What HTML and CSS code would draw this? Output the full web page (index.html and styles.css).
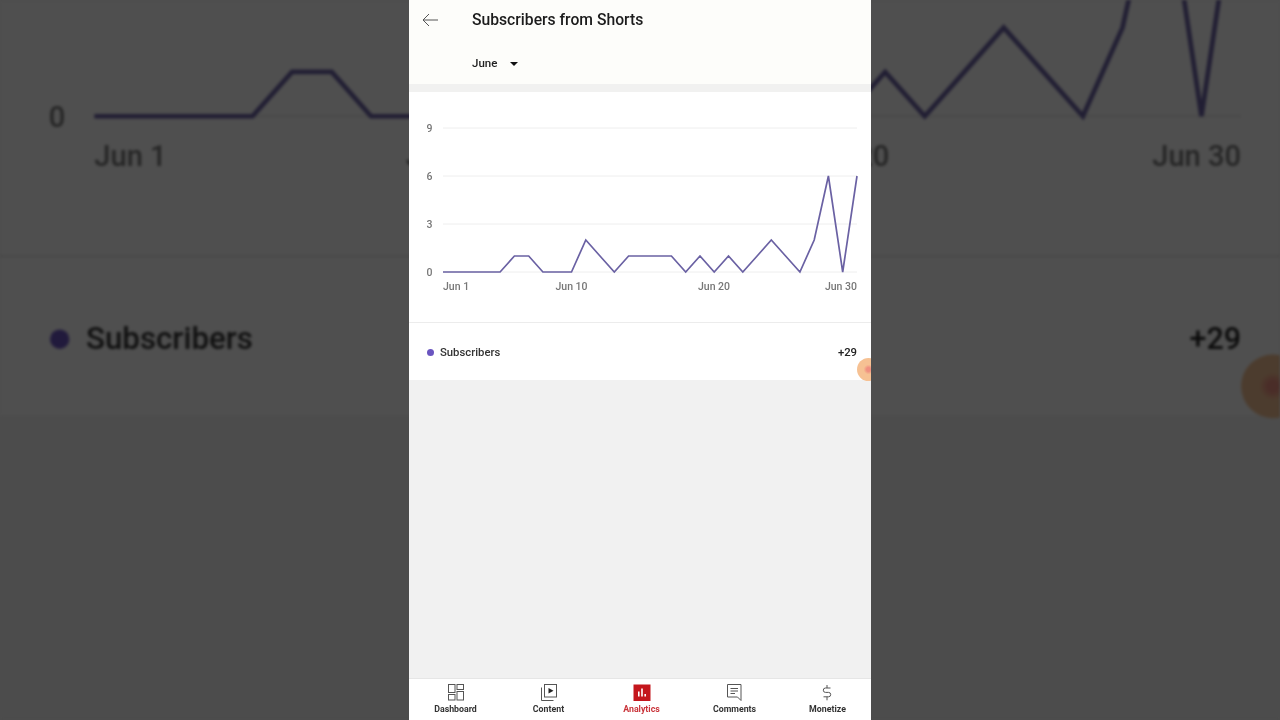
FILE: index.html
```html
<!DOCTYPE html>
<html lang="en">
<head>
  <meta charset="UTF-8">
  <meta name="viewport" content="width=device-width, initial-scale=1.0">
  <title>Subscribers from Shorts</title>
  <link rel="stylesheet" href="styles.css">
</head>
<body>

  <!-- Blurred video backdrop: same screen, zoomed to fill the frame -->
  <div class="backdrop">
    <div class="backdrop-screen">
      <div class="backdrop-spacer"></div>
      <section class="chart">
        <svg class="chart-svg" width="462" height="230" viewBox="0 0 462 230">
          <use href="#chartContent"></use>
        </svg>
      </section>
      <section class="legend">
        <span class="legend-dot"></span>
        <span class="legend-name">Subscribers</span>
        <span class="legend-value">+29</span>
        <span class="touch-dot"></span>
      </section>
    </div>
  </div>

  <div class="phone">

    <!-- Header -->
    <header class="topbar">
      <div class="title-row">
        <svg class="back-icon" width="18" height="14" viewBox="0 0 18 14">
          <path d="M17 7H2M8 1L2 7l6 6" fill="none" stroke="#555" stroke-width="1"/>
        </svg>
        <h1>Subscribers from Shorts</h1>
      </div>
      <div class="month-row">
        <span>June</span>
        <span class="caret"></span>
      </div>
    </header>

    <!-- Chart -->
    <section class="chart">
      <svg class="chart-svg" width="462" height="230" viewBox="0 0 462 230">
        <g id="chartContent">
          <g class="grid">
            <line x1="34" y1="36" x2="448" y2="36"/>
            <line x1="34" y1="84" x2="448" y2="84"/>
            <line x1="34" y1="132" x2="448" y2="132"/>
            <line x1="34" y1="180" x2="448" y2="180"/>
          </g>
          <g class="y-labels">
            <text x="20.5" y="40">9</text>
            <text x="20.5" y="88">6</text>
            <text x="20.5" y="136">3</text>
            <text x="20.5" y="184">0</text>
          </g>
          <polyline class="line" points="34,180 48.3,180 62.6,180 76.8,180 91.1,180 105.4,164 119.7,164 133.9,180 148.2,180 162.5,180 176.8,148 191,164 205.3,180 219.6,164 233.9,164 248.1,164 262.4,164 276.7,180 291,164 305.2,180 319.5,164 333.8,180 348.1,164 362.3,148 376.6,164 390.9,180 405.2,148 419.4,84 433.7,180 448,84"/>
          <g class="x-labels">
            <text x="34" y="198">Jun 1</text>
            <text x="162.5" y="198" text-anchor="middle">Jun 10</text>
            <text x="305" y="198" text-anchor="middle">Jun 20</text>
            <text x="448" y="198" text-anchor="end">Jun 30</text>
          </g>
        </g>
      </svg>
    </section>

    <!-- Legend -->
    <section class="legend">
      <span class="legend-dot"></span>
      <span class="legend-name">Subscribers</span>
      <span class="legend-value">+29</span>
      <span class="touch-dot"></span>
    </section>

    <div class="empty"></div>

    <!-- Bottom navigation -->
    <nav class="bottom-nav">
      <a class="nav-item">
        <svg width="18" height="17" viewBox="0 0 18 17" fill="none" stroke="#555" stroke-width="1">
          <rect x="1.5" y="0.5" width="6.5" height="8"/>
          <rect x="10" y="0.5" width="6.5" height="5"/>
          <rect x="1.5" y="10.5" width="6.5" height="5.5"/>
          <rect x="10" y="7.5" width="6.5" height="8.5"/>
        </svg>
        <span>Dashboard</span>
      </a>
      <a class="nav-item">
        <svg width="18" height="17" viewBox="0 0 18 17" fill="none" stroke="#555" stroke-width="1">
          <rect x="4.5" y="0.5" width="12" height="12.5"/>
          <path d="M1.5 3.5v13h12"/>
          <path d="M8.5 4l5 2.8-5 2.8z" fill="#222" stroke="none"/>
        </svg>
        <span>Content</span>
      </a>
      <a class="nav-item active">
        <svg width="18" height="17" viewBox="0 0 18 17">
          <rect width="17" height="16.5" x="0.5" y="0.5" fill="#c4161c"/>
          <path d="M5 7.5h1.6v5H5zM8.2 4.5h1.6v8H8.2zM11.4 10h1.6v2.5h-1.6z" fill="#fff"/>
        </svg>
        <span>Analytics</span>
      </a>
      <a class="nav-item">
        <svg width="18" height="17" viewBox="0 0 18 17" fill="none" stroke="#555" stroke-width="1">
          <path d="M1.5 0.5h13.5v16l-3.5-3.5h-10z"/>
          <path d="M4.5 4.5h7.5M4.5 7h7.5M4.5 9.5h4.5"/>
        </svg>
        <span>Comments</span>
      </a>
      <a class="nav-item">
        <svg width="18" height="17" viewBox="0 0 18 17" fill="none" stroke="#555" stroke-width="1">
          <path d="M11.5 4H6.5a2.2 2.2 0 0 0 0 4.4h3a2.2 2.2 0 0 1 0 4.4H4.5"/>
          <path d="M8 1v3M8 12.8v3.5"/>
        </svg>
        <span>Monetize</span>
      </a>
    </nav>
  </div>

</body>
</html>
```

FILE: styles.css
```css
/* Basic Reset */
* {
  margin: 0;
  padding: 0;
  box-sizing: border-box;
}

body {
  width: 1280px;
  height: 720px;
  overflow: hidden;
  display: flex;
  justify-content: center;
  font-family: Roboto, "Liberation Sans", sans-serif;
  color: #222;
  background-color: #4c4c4c;
}

/* Backdrop */
.backdrop {
  position: absolute;
  top: 0;
  left: 0;
  width: 1280px;
  height: 720px;
  overflow: hidden;
  display: flex;
  justify-content: center;
  filter: brightness(0.31) blur(1.4px);
}

.backdrop-screen {
  flex: none;
  width: 462px;
  height: 720px;
  background-color: #f6f6f6;
  transform: scale(2.77);
}

.backdrop-spacer {
  height: 92px;
  background-color: #fff;
}

.backdrop .legend-value {
  font-size: 11px;
}

/* Phone screen */
.phone {
  position: relative;
  width: 462px;
  height: 720px;
  overflow: hidden;
  display: flex;
  flex-direction: column;
  background-color: #f1f1f1;
  filter: blur(0.45px);
}

.topbar {
  height: 92px;
  background-color: #fdfdfa;
  border-bottom: 8px solid #f1f1f0;
}

.title-row {
  height: 39px;
  display: flex;
  align-items: center;
}

.back-icon {
  margin-left: 12px;
}

.title-row h1 {
  margin-left: 33px;
  font-size: 15.7px;
  font-weight: 500;
  color: #1c1c1c;
}

.month-row {
  height: 47px;
  padding-left: 63px;
  display: flex;
  align-items: center;
  font-size: 11.5px;
  font-weight: 500;
  color: #222;
}

.caret {
  margin-left: 13px;
  margin-top: 2px;
  border-left: 4.5px solid transparent;
  border-right: 4.5px solid transparent;
  border-top: 4.5px solid #111;
}

/* Chart */
.chart {
  height: 231px;
  background-color: #fff;
  border-bottom: 1px solid #ececec;
}

.chart-svg {
  display: block;
}

.grid line {
  stroke: #eeeeee;
  stroke-width: 1;
}

.y-labels text,
.x-labels text {
  font-family: Roboto, "Liberation Sans", sans-serif;
  font-size: 10.5px;
  font-weight: 500;
  fill: #777;
}

.y-labels text {
  text-anchor: middle;
}

.line {
  fill: none;
  stroke: #6a61a3;
  stroke-width: 1.7;
  stroke-linejoin: miter;
}

.backdrop .line {
  stroke-width: 1.3;
}

/* Legend */
.legend {
  position: relative;
  height: 57px;
  padding: 1px 14px 0 18px;
  display: flex;
  align-items: center;
  background-color: #fff;
  font-size: 11.3px;
  font-weight: 500;
}

.legend-dot {
  width: 7px;
  height: 7px;
  margin-right: 6px;
  border-radius: 50%;
  background-color: #6a55c0;
}

.legend-name {
  flex: 1;
  color: #333;
}

.legend-value {
  color: #222;
}

.touch-dot {
  position: absolute;
  left: 448px;
  top: 35px;
  width: 23px;
  height: 23px;
  border-radius: 50%;
  background: radial-gradient(circle, #f09080 0, #f09080 12%, #f6c193 30%, #f6c193 70%, rgba(246, 193, 147, 0.1) 100%);
}

.empty {
  flex: 1;
}

/* Bottom navigation */
.bottom-nav {
  height: 42px;
  display: grid;
  grid-template-columns: repeat(5, 93px);
  background-color: #fff;
  border-top: 1px solid #e6e6e6;
}

.nav-item {
  padding-top: 5px;
  display: flex;
  flex-direction: column;
  align-items: center;
  gap: 3px;
  font-size: 8.8px;
  font-weight: 700;
  color: #333;
}

.nav-item.active {
  color: #c9343a;
}
```
